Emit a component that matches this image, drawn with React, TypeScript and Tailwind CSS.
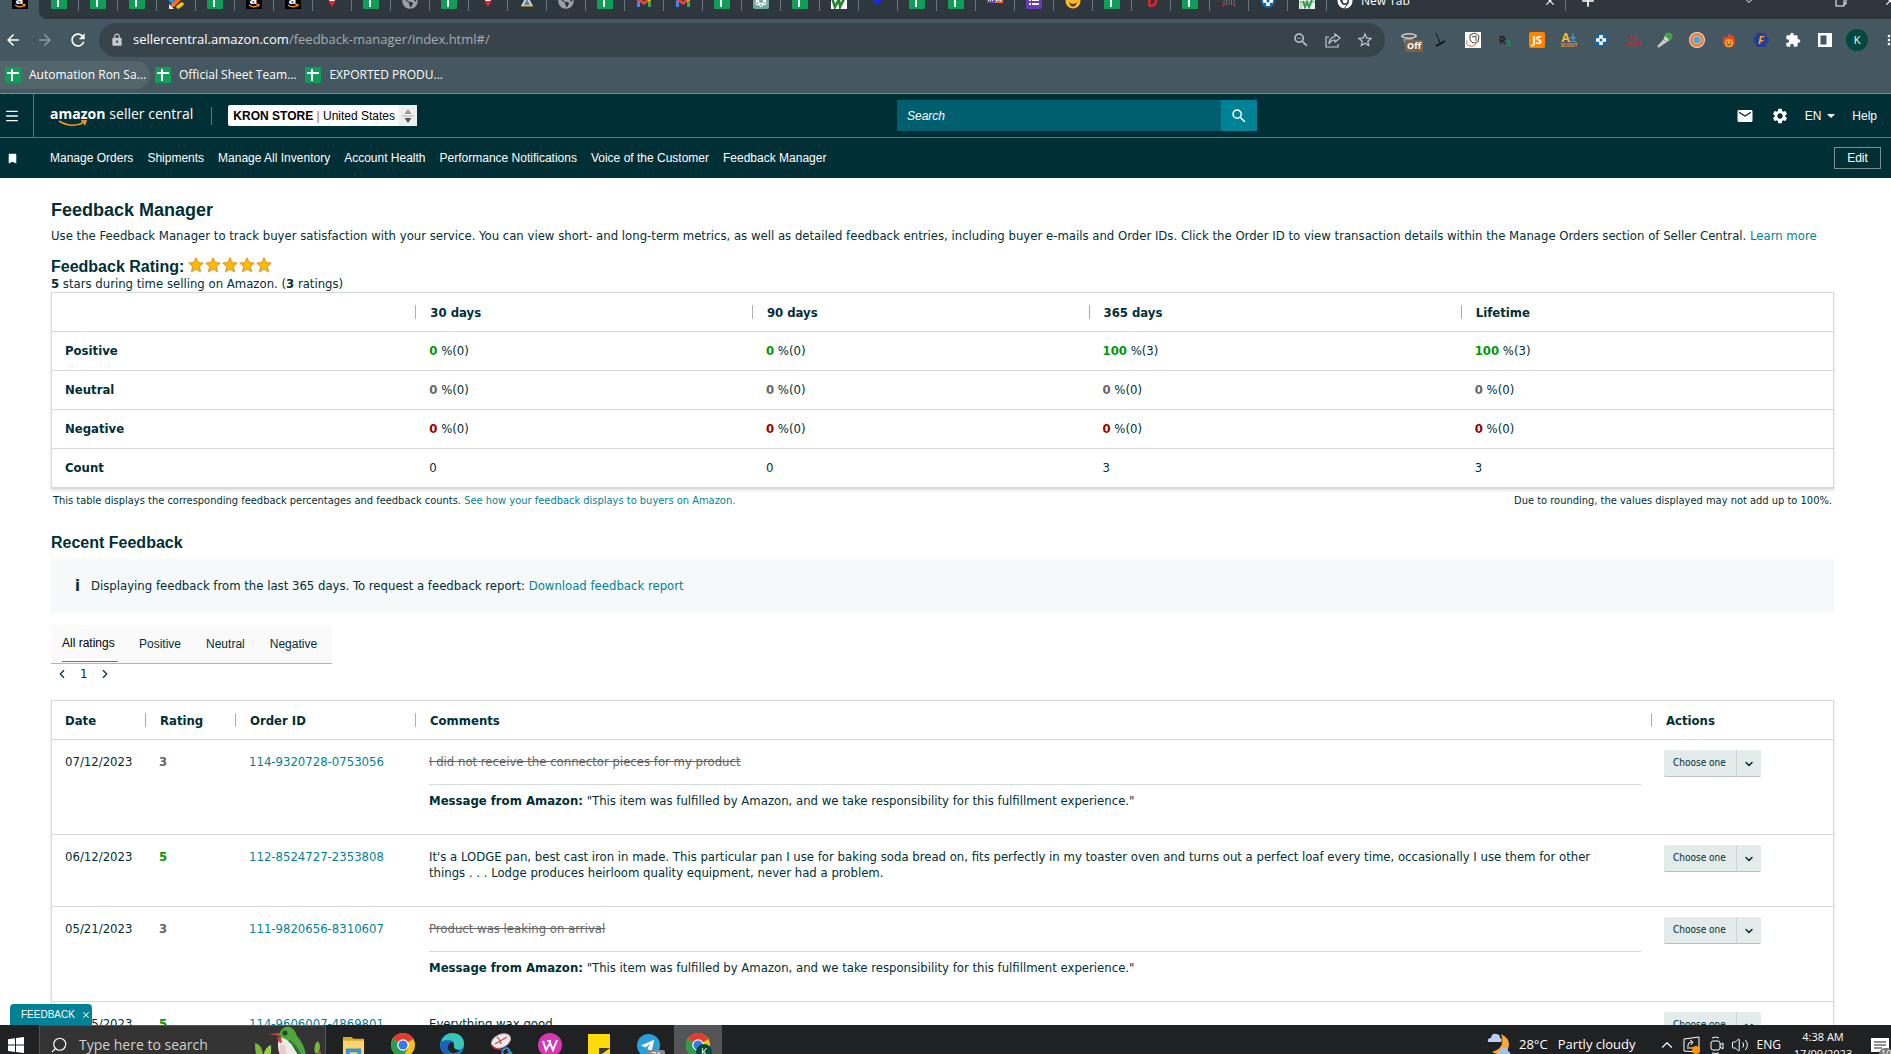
import React from 'react';
import {
  MdArrowBack, MdArrowForward, MdRefresh, MdLock, MdExtension, MdSettings, MdSearch,
  MdBookmark, MdEmail, MdMoreVert, MdZoomOut, MdStarBorder, MdAdd, MdClose,
} from 'react-icons/md';
import { FaGlobeAmericas } from 'react-icons/fa';
import { ChevronDown, ChevronLeft, ChevronRight, ChevronUp, Menu, Search, Volume2 } from 'lucide-react';

const SheetsIcon = () => (
  <svg viewBox="0 0 16 16" className="size-4 shrink-0">
    <rect width="16" height="16" rx="1" fill="#0f9d58" />
    <path d="M2 6h12M7 2v12" stroke="#fff" strokeWidth="2" />
  </svg>
);

const AmazonIcon = () => (
  <span className="relative flex size-4 shrink-0 items-center justify-center bg-black text-[13px] font-bold leading-none text-white">
    <span className="mb-1">a</span>
    <svg viewBox="0 0 16 16" className="absolute inset-0">
      <path d="M3 12q5 3.500 9.500 .3M10.500 11.300l2.500 .2-.6 2" fill="none" stroke="#f90" strokeWidth="1.300" />
    </svg>
  </span>
);

const GmailIcon = () => (
  <svg viewBox="0 0 16 16" className="size-4 shrink-0">
    <path d="M1 14V4h3v10z" fill="#4285f4" />
    <path d="M12 14V4h3v10z" fill="#34a853" />
    <path d="M1 3l7 5.500L15 3v4l-7 5-7-5z" fill="#ea4335" />
    <path d="M12 5.500L15 3v4l-3 2z" fill="#fbbc04" />
  </svg>
);

const RedPinIcon = () => (
  <svg viewBox="0 0 16 16" className="size-4 shrink-0">
    <path d="M4 5l4-3 4 3-1 4-3 5-3-5z" fill="#e8212b" />
    <path d="M5.500 7.500h5" stroke="#fff" />
  </svg>
);

const GlobeIcon = () => <FaGlobeAmericas className="size-4 shrink-0 text-[#9aa0a6]" />;

const PlusDiscIcon = () => (
  <svg viewBox="0 0 16 16" className="size-4 shrink-0">
    <circle cx="8" cy="8" r="7" fill="#17659b" />
    <path d="M6.200 3h3.600v3.200H13v3.600H9.800V13H6.200V9.800H3V6.200h3.200z" fill="#fff" />
    <circle cx="8" cy="8" r="1.500" fill="#17659b" />
  </svg>
);

const BrushIcon = () => (
  <svg viewBox="0 0 16 16" className="size-4 shrink-0">
    <path d="M2 9L9 2" stroke="#2196f3" strokeWidth="4" />
    <path d="M5 12l8-8" stroke="#ff6d1f" strokeWidth="4" strokeLinecap="round" />
    <path d="M10 14l4-3" stroke="#ffc107" strokeWidth="3.500" strokeLinecap="round" />
    <path d="M1 11v5h5z" fill="#eee" />
  </svg>
);

const MountainIcon = () => (
  <svg viewBox="0 0 16 16" className="size-4 shrink-0">
    <path d="M2 13L8 2l6 11z" fill="#cfd4d8" />
    <path d="M5 12l3-6 3 6z" fill="#607d8b" />
    <path d="M2 13h12" stroke="#e6b422" />
  </svg>
);

const GptIcon = () => (
  <svg viewBox="0 0 16 16" className="size-4 shrink-0">
    <rect width="16" height="16" rx="2" fill="#74aa9c" />
    <g fill="none" stroke="#fff">
      <ellipse cx="8" cy="8" rx="2.500" ry="5.500" />
      <ellipse cx="8" cy="8" rx="2.500" ry="5.500" transform="rotate(60 8 8)" />
      <ellipse cx="8" cy="8" rx="2.500" ry="5.500" transform="rotate(120 8 8)" />
    </g>
  </svg>
);

const LeafIcon = () => (
  <svg viewBox="0 0 16 16" className="size-4 shrink-0">
    <rect width="16" height="16" fill="#fff" />
    <path d="M1 5l3 9 4-8 1 8 5-10" fill="none" stroke="#22822b" strokeWidth="2.500" />
  </svg>
);

const BirdIcon = () => (
  <svg viewBox="0 0 16 16" className="size-4 shrink-0">
    <path d="M1 6l5 1 9-3-5 5-5 5 1-4z" fill="#1330e6" />
  </svg>
);

const StripesIcon = () => (
  <svg viewBox="0 0 16 16" className="size-4 shrink-0">
    <rect y="5" width="8" height="5" fill="#6a4bb5" />
    <rect x="8" y="5" width="8" height="5" fill="#f0702a" />
    <path d="M1 7.500h6M9 7.500h6" stroke="#fff" strokeDasharray="1 1" />
  </svg>
);

const FormsIcon = () => (
  <svg viewBox="0 0 16 16" className="size-4 shrink-0">
    <rect width="16" height="16" rx="1" fill="#673ab7" />
    <path d="M6 7h7M6 11h7" stroke="#fff" strokeWidth="2" />
    <path d="M3 7h2M3 11h2" stroke="#fff" strokeWidth="2" />
  </svg>
);

const EmojiIcon = () => (
  <svg viewBox="0 0 16 16" className="size-4 shrink-0">
    <circle cx="8" cy="8" r="7.500" fill="#fbb92c" />
    <path d="M4 9q4 4 8 0-1 4.500-4 4.500T4 9z" fill="#5b3413" />
    <path d="M4.500 6h2M9.500 6h2" stroke="#5b3413" strokeWidth="1.500" />
  </svg>
);

const RedLoopIcon = () => (
  <svg viewBox="0 0 16 16" className="size-4 shrink-0">
    <path d="M2 6q2-3 5-2l-1 9M7 4q6-1 6 4t-7 5" fill="none" stroke="#e3232c" strokeWidth="2.500" />
  </svg>
);

const GridIcon = () => (
  <svg viewBox="0 0 16 16" className="size-4 shrink-0">
    <path d="M3 3v9M5.500 3v9M8 3v9M10.500 3v9M13 3v9" stroke="#6b7075" />
    <path d="M1 13l3-2M15 13l-3-2" stroke="#b3262b" strokeWidth="2" />
  </svg>
);

const GreenBarsIcon = () => (
  <svg viewBox="0 0 16 16" className="size-4 shrink-0">
    <rect width="16" height="16" fill="#e8f1e8" />
    <path d="M2 8v8M0 9h16" stroke="#7cc08c" />
    <path d="M4 8l2 6 2-5 2 5 3-7" fill="none" stroke="#2e9b4f" strokeWidth="2" />
  </svg>
);

const ChromeIcon = ({ className }: { className: string }) => (
  <svg viewBox="0 0 24 24" className={className}>
    <circle cx="12" cy="12" r="12" fill="#fbc116" />
    <path d="M12 12L1.600 6A12 12 0 0 1 22.400 6z" fill="#e33b2e" />
    <path d="M12 12L1.600 6A12 12 0 0 0 12 24l5-9z" fill="#2c9e4b" />
    <circle cx="12" cy="12" r="5.800" fill="#fff" />
    <circle cx="12" cy="12" r="4.600" fill="#3b78e7" />
  </svg>
);

const tabIcons = [
  SheetsIcon, SheetsIcon, SheetsIcon, BrushIcon, SheetsIcon, AmazonIcon, AmazonIcon, RedPinIcon,
  SheetsIcon, GlobeIcon, SheetsIcon, RedPinIcon, MountainIcon, GlobeIcon, SheetsIcon, GmailIcon,
  GmailIcon, SheetsIcon, GptIcon, SheetsIcon, LeafIcon, BirdIcon, SheetsIcon, SheetsIcon,
  StripesIcon, FormsIcon, EmojiIcon, SheetsIcon, RedLoopIcon, SheetsIcon, GridIcon, PlusDiscIcon,
  GreenBarsIcon,
];

const bookmarks = ['Automation Ron Sa...', 'Official Sheet Team...', 'EXPORTED PRODU...'];

const navLinks = [
  'Manage Orders', 'Shipments', 'Manage All Inventory', 'Account Health',
  'Performance Notifications', 'Voice of the Customer', 'Feedback Manager',
];

const periods = ['30 days', '90 days', '365 days', 'Lifetime'];

const ratingRows = [
  { label: 'Positive', color: 'text-[#009900]', values: [[0, 0], [0, 0], [100, 3], [100, 3]] },
  { label: 'Neutral', color: 'text-[#666666]', values: [[0, 0], [0, 0], [0, 0], [0, 0]] },
  { label: 'Negative', color: 'text-[#990000]', values: [[0, 0], [0, 0], [0, 0], [0, 0]] },
];

const amazonMessage = '"This item was fulfilled by Amazon, and we take responsibility for this fulfillment experience."';

const feedback = [
  { date: '07/12/2023', rating: 3, order: '114-9320728-0753056', comment: 'I did not receive the connector pieces for my product', struck: true },
  {
    date: '06/12/2023', rating: 5, order: '112-8524727-2353808', struck: false,
    comment: "It's a LODGE pan, best cast iron in made. This particular pan I use for baking soda bread on, fits perfectly in my toaster oven and turns out a perfect loaf every time, occasionally I use them for other things . . . Lodge produces heirloom quality equipment, never had a problem.",
  },
  { date: '05/21/2023', rating: 3, order: '111-9820656-8310607', comment: 'Product was leaking on arrival', struck: true },
  { date: '05/15/2023', rating: 5, order: '114-9606007-4869801', comment: 'Everything wax good', struck: false },
];

const TabStrip = () => (
  <div className="flex h-[19px] items-end overflow-hidden bg-[#2d373d]">
    <div className="flex h-9 w-full shrink-0 items-center bg-[#455760]">
      <div className="flex h-9 w-[39px] shrink-0 items-center justify-center">
        <AmazonIcon />
      </div>
      <div className="flex h-9 min-w-0 flex-1 items-center rounded-bl-lg bg-[#2d373d]">
        {tabIcons.map((Icon, i) => (
          <div key={i} className="flex h-9 w-[39px] shrink-0 items-center justify-center">
            <Icon />
            <span className="-mr-3 ml-[11px] h-5 w-px bg-[#69757c]" />
          </div>
        ))}
        <div className="flex h-9 w-[240px] shrink-0 items-center gap-2 pl-[11px] text-xs text-white">
          <svg viewBox="0 0 16 16" className="size-4">
            <circle cx="8" cy="8" r="7.500" fill="#fff" />
            <circle cx="8" cy="8" r="3.200" fill="none" stroke="#2d373d" strokeWidth="1.500" />
            <path d="M8 4.500h7M5 10L2 5M11 10l-4 6" stroke="#2d373d" />
          </svg>
          <span>New Tab</span>
          <button aria-label="Close tab" className="ml-auto"><MdClose className="size-3.5" /></button>
          <span className="h-5 w-px bg-[#69757c]" />
        </div>
        <button aria-label="New tab" className="ml-3 text-white"><MdAdd className="size-5" /></button>
        <div className="ml-auto flex items-center text-white">
          <ChevronDown className="size-3" />
          <svg viewBox="0 0 12 12" className="ml-20 size-3" fill="none" stroke="currentColor">
            <rect x="1" y="3" width="8" height="8" />
            <path d="M3 3V1h8v8H9" />
          </svg>
          <MdClose className="-mr-1.5 ml-9 size-3.5" />
        </div>
      </div>
    </div>
  </div>
);

const Extensions = () => (
  <div className="flex items-center gap-4">
    <span className="relative size-4">
      <svg viewBox="0 0 16 16" className="size-4">
        <ellipse cx="8" cy="4" rx="8" ry="3" fill="#c9ccce" />
        <ellipse cx="8" cy="4" rx="6" ry="1.500" fill="#555" />
        <path d="M2 7h10v6H4z" fill="#8b8f92" />
      </svg>
      <span className="absolute left-1 top-2 rounded-xs bg-[#806242] px-0.5 text-[9px] font-bold leading-3 text-white">Off</span>
    </span>
    <svg viewBox="0 0 16 16" className="size-4">
      <path d="M3 1l5 12" stroke="#111" />
      <path d="M3 14l9-5" stroke="#111" strokeWidth="1.800" />
    </svg>
    <svg viewBox="0 0 16 16" className="size-4">
      <rect width="16" height="16" fill="#fff" />
      <path d="M5 3l5-2 4 3-1 6-5 1-3-3z" fill="none" stroke="#444" />
      <path d="M7 5l4-1v5" fill="none" stroke="#444" />
      <path d="M2 8q-2 5 3 6t7-4" fill="none" stroke="#e7a57a" strokeWidth="1.500" />
    </svg>
    <span className="flex size-4 items-center justify-center text-[11px] font-bold text-[#222]">R<span className="mt-1 text-[#168a44]">s</span></span>
    <span className="flex size-4 items-center justify-center rounded-xs bg-[#ff8400] text-[11px] font-bold text-white">JS</span>
    <span className="flex size-4 flex-col items-center justify-center text-[#fdb92e]">
      <span className="text-[12px] font-bold leading-[11px]">A<span className="text-[#24a8e0]">±</span></span>
      <span className="text-[5px] font-bold leading-[5px] text-[#f39a1e]">SCOUT</span>
    </span>
    <PlusDiscIcon />
    <span className="flex size-4 flex-col items-center justify-center font-['Liberation_Serif',serif] text-[7px] font-bold leading-[6px] text-[#dd1c24]"><span>IP</span><span>Alert</span></span>
    <svg viewBox="0 0 16 16" className="size-4">
      <path d="M1 15l8-9 2 2z" stroke="#c8c8c8" strokeWidth="2" />
      <circle cx="11.500" cy="4.500" r="4" fill="#49a044" />
      <path d="M8 4l4 4-2 1-3-3z" fill="#ddd" />
    </svg>
    <svg viewBox="0 0 16 16" className="size-4">
      <circle cx="8" cy="8" r="8" fill="#f4dccb" />
      <circle cx="8" cy="8" r="5.500" fill="none" stroke="#ee7f3b" strokeWidth="3" />
      <circle cx="8" cy="8" r="3.500" fill="#4aa6dc" />
    </svg>
    <svg viewBox="0 0 16 16" className="size-4">
      <path d="M8 0q1 3 3 4l1-1q2 3 2 6.500A6 6 0 0 1 2 10q0-4 2-6l1 2q3-2 3-6z" fill="#e4472b" />
      <circle cx="8" cy="11" r="4" fill="#f7a823" />
      <path d="M6 10h1M9 10h1M6 12q2 2 4 0" stroke="#4d2208" fill="none" />
    </svg>
    <span className="relative flex size-4 items-center justify-center text-[11px] font-bold italic text-[#f7a823]">
      <svg viewBox="0 0 16 16" className="absolute inset-0"><path d="M4 1h8l4 7-4 7H4L0 8z" fill="#243b98" /></svg>
      <span className="relative">F</span>
    </span>
    <MdExtension className="size-4 text-white" />
    <svg viewBox="0 0 16 16" className="size-4">
      <path d="M1 1h14v14H1z" fill="#fff" />
      <path d="M3.500 3.500h6v9h-6z" fill="#455760" />
    </svg>
    <span className="-mx-[3px] flex size-[22px] items-center justify-center rounded-full bg-[#00493c] text-[11px] text-white">K</span>
    <MdMoreVert className="-mr-1.5 size-4 text-white" />
  </div>
);

const Toolbar = () => (
  <div className="border-b border-[#7b8b91] bg-[#455760]">
    <div className="flex items-center pt-1">
      <div className="flex w-[99px] shrink-0 items-center gap-3.5 pl-1 text-white">
        <button aria-label="Back"><MdArrowBack className="size-[18px]" /></button>
        <button aria-label="Forward" className="text-[#8d989e]"><MdArrowForward className="size-[18px]" /></button>
        <button aria-label="Reload"><MdRefresh className="size-5" /></button>
      </div>
      <div className="flex h-[34px] flex-1 items-center gap-[9px] rounded-full bg-[#38444b] px-[11px] text-[#c3c8cb]">
        <MdLock className="size-3.5" />
        <div className="flex-1 text-[13px] text-[#a5adb1]">
          <span className="text-white">sellercentral.amazon.com</span>/feedback-manager/index.html#/
        </div>
        <MdZoomOut className="size-[18px]" />
        <svg viewBox="0 0 16 16" className="mx-1.5 size-4" fill="none" stroke="currentColor" strokeWidth="1.200">
          <path d="M4 5H1v10h12v-3" />
          <path d="M10 2l5 4-5 4V8Q6 8 4 12q0-6 6-7.500z" />
        </svg>
        <MdStarBorder className="size-[18px]" />
      </div>
      <div className="pl-4"><Extensions /></div>
    </div>
    <div className="flex h-9 items-center text-xs text-white">
      {bookmarks.map((name, i) => (
        <a key={name} href="#" className={`flex h-7 items-center gap-2 rounded-r-full pl-[5px] pr-1 ${i === 0 ? 'bg-[#52656b]' : ''}`}>
          <SheetsIcon />
          {name}
        </a>
      ))}
    </div>
  </div>
);

const SellerHeader = () => (
  <header className="bg-[#002f36] font-['Liberation_Sans',Arial,sans-serif] text-xs text-white">
    <div className="flex h-11 items-center border-b border-[#5b777c]">
      <button aria-label="Menu" className="flex h-full w-[34px] items-center border-r border-[#5b777c] pl-1">
        <Menu className="size-4" />
      </button>
      <a href="#" aria-label="amazon seller central" className="relative mb-1 ml-4 flex gap-1 font-['Open_Sans',sans-serif] text-sm leading-5">
        <span className="font-bold">amazon</span>
        <span>seller central</span>
        <svg viewBox="0 0 30 8" className="absolute left-2 top-4 h-2 w-[30px]" fill="none" stroke="#f7981d" strokeWidth="1.500">
          <path d="M1 1q13 8 26 1M23 1l5-.2-1.500 4.500" />
        </svg>
      </a>
      <span className="ml-[18px] h-[18px] w-px bg-[#5b777c]" />
      <div className="relative ml-4 flex h-[21px] items-center rounded-xs bg-white pl-[5px] text-black">
        <span><b>KRON STORE</b> <span className="text-[#a06a1c]">|</span> United States</span>
        <span className="ml-1 flex h-full w-[18px] items-center justify-center bg-[#efefef]">
          <svg viewBox="0 0 12 14" className="h-3.5 w-3">
            <path d="M6 0l3.500 5h-7z" fill="#999" />
            <path d="M0 7h12" stroke="#aaa" />
            <path d="M6 14L2.500 9h7z" fill="#555" />
          </svg>
        </span>
        <select aria-label="Store and marketplace" className="absolute inset-0 opacity-0">
          <option>KRON STORE | United States</option>
        </select>
      </div>
      <form className="ml-[480px] flex h-[31px] min-w-0 shrink">
        <input aria-label="Search" placeholder="Search" className="w-[324px] min-w-0 bg-[#005f6f] px-2.5 italic placeholder:text-white" />
        <button type="button" aria-label="Submit search" className="flex w-9 items-center justify-center bg-[#008296]">
          <MdSearch className="size-[18px]" />
        </button>
      </form>
      <div className="ml-auto flex items-center pr-3.5">
        <button aria-label="Messages"><MdEmail className="size-[18px]" /></button>
        <button aria-label="Settings" className="ml-[17px]"><MdSettings className="size-[18px]" /></button>
        <button className="ml-4 flex items-center gap-1.5">
          EN
          <svg viewBox="0 0 8 4" className="h-1 w-2"><path d="M0 0h8L4 4z" fill="#fff" /></svg>
        </button>
        <a href="#" className="ml-[17px]">Help</a>
      </div>
    </div>
    <nav className="flex h-10 items-center">
      <MdBookmark className="ml-[6px] mr-[31px] size-[13px]" />
      <div className="flex gap-3.5">
        {navLinks.map((link) => <a key={link} href="#">{link}</a>)}
      </div>
      <button className="ml-auto mr-2.5 h-[22px] w-[47px] border border-[#7b8f93]">Edit</button>
    </nav>
  </header>
);

const Star = () => (
  <svg viewBox="0 0 16 16" className="size-4">
    <path d="M8 .8l2.100 4.800 5.100.5-3.800 3.500 1.100 5.200L8 12.100l-4.500 2.700 1.100-5.200L.8 6.100l5.100-.5z" fill="#ffba00" stroke="#d9922b" />
  </svg>
);

const RatingTable = () => (
  <table className="w-full table-fixed border-separate border-spacing-0 border border-b-2 border-[#d5dbdb] text-left shadow-[0_1px_3px_rgba(0,0,0,0.15)]">
    <thead>
      <tr className="h-[38px]">
        <td className="w-[20.4%]" />
        {periods.map((p, i) => (
          <th key={p} className={i < 2 ? 'w-[18.9%] p-0' : 'w-[20.9%] p-0'}>
            <div className="h-3.5 border-l border-[#a6b1b3] pl-3.5 leading-4">{p}</div>
          </th>
        ))}
      </tr>
    </thead>
    <tbody>
      {ratingRows.map((row) => (
        <tr key={row.label} className="h-[39px]">
          <th className="border-t border-[#d5dbdb] pl-[13px]">{row.label}</th>
          {row.values.map(([pct, count], i) => (
            <td key={i} className="border-t border-[#d5dbdb] pl-3.5">
              <b className={row.color}>{pct}</b> %({count})
            </td>
          ))}
        </tr>
      ))}
      <tr className="h-[39px]">
        <th className="border-t border-[#d5dbdb] pl-[13px]">Count</th>
        {[0, 0, 3, 3].map((n, i) => <td key={i} className="border-t border-[#d5dbdb] pl-3.5">{n}</td>)}
      </tr>
    </tbody>
  </table>
);

const FeedbackTable = () => (
  <table className="w-full table-fixed border-separate border-spacing-0 border border-[#d5dbdb] text-left shadow-[0_1px_3px_rgba(0,0,0,0.15)]">
    <thead>
      <tr className="h-[38px]">
        <th className="w-[93px] p-0"><div className="h-3.5 pl-[13px] leading-4">Date</div></th>
        <th className="w-[90px] p-0"><div className="h-3.5 border-l border-[#a6b1b3] pl-3.5 leading-4">Rating</div></th>
        <th className="w-[180px] p-0"><div className="h-3.5 border-l border-[#a6b1b3] pl-3.5 leading-4">Order ID</div></th>
        <th className="p-0"><div className="h-3.5 border-l border-[#a6b1b3] pl-3.5 leading-4">Comments</div></th>
        <th className="w-[182px] p-0"><div className="h-3.5 border-l border-[#a6b1b3] pl-3.5 leading-4">Actions</div></th>
      </tr>
    </thead>
    <tbody>
      {feedback.map((f) => (
        <tr key={f.order} className="align-top">
          <td className="border-t border-[#d5dbdb] pl-[13px] pt-3.5">{f.date}</td>
          <td className={`border-t border-[#d5dbdb] pl-3.5 pt-3.5 font-bold ${f.rating === 5 ? 'text-[#009900]' : 'text-[#666666]'}`}>{f.rating}</td>
          <td className="border-t border-[#d5dbdb] pl-3.5 pt-3.5"><a href="#" className="text-[#008296]">{f.order}</a></td>
          <td className="border-t border-[#d5dbdb] pb-[25px] pl-3.5 pr-[10px] pt-3.5">
            <p className={f.struck ? 'text-[#666666] line-through' : 'pr-4'}>{f.comment}</p>
            {f.struck && (
              <p className="mt-3.5 border-t border-[#d5dbdb] pt-2">
                <b>Message from Amazon:</b> {amazonMessage}
              </p>
            )}
          </td>
          <td className="border-t border-[#d5dbdb] pl-[13px] pt-2.5">
            <div className="relative w-[97px]">
              <select aria-label={`Action for order ${f.order}`} className="block h-[27px] w-full appearance-none rounded-xs border-b border-[#b9c1c1] bg-[#e3ebeb] pl-[9px] text-[10px]">
                <option>Choose one</option>
              </select>
              <span className="pointer-events-none absolute inset-y-0 right-0 flex w-[25px] items-center justify-center border-l border-[#cdd6d6]">
                <ChevronDown className="size-3" strokeWidth={3} />
              </span>
            </div>
          </td>
        </tr>
      ))}
    </tbody>
  </table>
);

const FeedbackManager = () => (
  <main className="relative min-h-0 flex-1 overflow-hidden bg-white pl-[51px] pr-[57px] font-['DejaVu_Sans_Condensed','DejaVu_Sans',Verdana,sans-serif] text-[13px] leading-4 text-[#002f36]">
    <h1 className="mt-5 font-['Liberation_Sans',Arial,sans-serif] text-lg font-bold leading-6">Feedback Manager</h1>
    <p className="mt-1.5">
      Use the Feedback Manager to track buyer satisfaction with your service. You can view short- and long-term metrics, as well as detailed feedback entries, including buyer e-mails and Order IDs. Click the Order ID to view transaction details within the Manage Orders section of Seller Central. <a href="#" className="text-[#008296]">Learn more</a>
    </p>
    <div className="mt-3.5 flex h-[18px] items-center gap-1">
      <h2 className="font-['Liberation_Sans',Arial,sans-serif] text-base font-bold leading-5">Feedback Rating:</h2>
      <div className="mb-1 flex gap-px">
        {[1, 2, 3, 4, 5].map((n) => <Star key={n} />)}
      </div>
    </div>
    <p><b>5</b> stars during time selling on Amazon. (<b>3</b> ratings)</p>
    <RatingTable />
    <div className="mt-1 flex justify-between px-0.5 text-[11px]">
      <p>This table displays the corresponding feedback percentages and feedback counts. <a href="#" className="text-[#008296]">See how your feedback displays to buyers on Amazon.</a></p>
      <p>Due to rounding, the values displayed may not add up to 100%.</p>
    </div>
    <h2 className="mt-6 font-['Liberation_Sans',Arial,sans-serif] text-base font-bold leading-5">Recent Feedback</h2>
    <div className="mt-1.5 flex h-[54px] items-center bg-[#f5f9fa] pl-6">
      <b className="w-4 text-base">i</b>
      <p>Displaying feedback from the last 365 days. To request a feedback report: <a href="#" className="text-[#008296]">Download feedback report</a></p>
    </div>
    <div className="mt-3 flex h-[39px] w-[281px] border-b border-[#b5b5b5] bg-[#fafafa] pl-[11px] font-['Liberation_Sans',Arial,sans-serif] text-xs">
      <button className="mb-px mr-[21px] w-14 border-b border-[#00a4b4] text-left text-black">All ratings</button>
      <button className="mr-[25px]">Positive</button>
      <button className="mr-[25px]">Neutral</button>
      <button>Negative</button>
    </div>
    <div className="flex h-5 items-center gap-[11px] pl-1">
      <button aria-label="Previous page"><ChevronLeft className="size-3.5" strokeWidth={2} /></button>
      <span>1</span>
      <button aria-label="Next page"><ChevronRight className="size-3.5" strokeWidth={2} /></button>
    </div>
    <div className="mt-4"><FeedbackTable /></div>
    <button className="absolute bottom-0 left-[10px] flex h-[21px] w-[82px] items-center gap-1.5 rounded-t bg-[#008296] pl-[11px] font-['Liberation_Sans',Arial,sans-serif] text-[10px] text-white">
      FEEDBACK <MdClose className="size-2.5" />
    </button>
  </main>
);

const Bird = () => (
  <svg viewBox="0 0 66 40" className="ml-auto mr-1 h-10 w-[66px]">
    <path d="M0 18q8 2 8 14l-1 8H4Q0 30 0 18z" fill="#7cb63a" />
    <path d="M8 36q0-13 8-16 1 12-5 20H8z" fill="#9acb4b" />
    <path d="M24 13q5-3 10 2l8 13 6 12H32q-12-12-8-27z" fill="#e9efe6" />
    <path d="M25 20q-2 10 6 18l8 2q-8-8-9-20z" fill="#f0c9cf" />
    <path d="M25 7q3-6 10-5 5 2 7 9 8 8 10 25-8-4-12-14l-8-7-8-4z" fill="#4ea63c" />
    <path d="M34 16q8 4 14 20" stroke="#2c7a35" strokeWidth="2" fill="none" />
    <path d="M25 11L13 9l12-1z" fill="#c9473d" />
    <path d="M22 12q1 6 5 6l-1-6z" fill="#e0352e" />
    <circle cx="30" cy="8" r="2.500" fill="#1d4d2a" />
    <path d="M46 33q10 1 20-6" stroke="#8a6546" strokeWidth="2.500" fill="none" />
    <path d="M60 28q-2-8 3-12 4 6 0 12z" fill="#7cb63a" />
  </svg>
);

const Taskbar = () => (
  <footer className="h-[29px] shrink-0 overflow-hidden bg-[#202122] font-['Open_Sans',sans-serif] text-[13px] text-white">
    <div className="flex h-10 items-center">
      <button aria-label="Start" className="flex w-[39px] shrink-0 justify-center pr-2">
        <svg viewBox="0 0 16 16" className="size-4" fill="#fff">
          <path d="M0 2.200l7-1v6.400H0zM8 1l8-1v7.600H8zM0 8.600h7V15l-7-1zM8 8.600h8V16l-8-1z" />
        </svg>
      </button>
      <label className="flex h-full w-[287px] shrink-0 items-center border border-[#555] bg-[#333]">
        <Search className="ml-2.5 size-[18px] shrink-0 -scale-x-100" strokeWidth={1.5} />
        <input aria-label="Type here to search" placeholder="Type here to search" className="ml-[11px] w-[150px] min-w-0 text-sm placeholder:text-[#d0d0d0]" />
        <Bird />
      </label>
      <div className="flex h-full items-center pl-0.5">
        <div className="flex w-[50px] justify-center">
          <svg viewBox="0 0 24 24" className="size-[23px]">
            <path d="M1 3h9l2 2h11v16H1z" fill="#dfa22f" />
            <path d="M1 7h22v14H1z" fill="#fcd46c" />
            <path d="M4 24v-9h16v9h-4v-5H8v5z" fill="#3a92d6" />
          </svg>
        </div>
        <div className="flex w-[49px] justify-center"><ChromeIcon className="size-6" /></div>
        <div className="flex w-[49px] justify-center">
          <svg viewBox="0 0 24 24" className="size-6">
            <circle cx="12" cy="12" r="12" fill="#1479c9" />
            <path d="M1 9Q4 0 13 0q11 1 11 11 0 6-8 6-4-1-2-4 1-6-5-6-5 0-8 2z" fill="#39c4b8" />
            <path d="M14 12q-1 5 6 5-6 6-11 1-4-6 2-9 3 0 3 3z" fill="#202122" />
            <path d="M1 9q6-3 10 0-5 4-2 10 3 5 9 3-8 5-14-1Q0 16 1 9z" fill="#1b62b5" />
          </svg>
        </div>
        <div className="flex w-[49px] justify-center">
          <svg viewBox="0 0 24 24" className="size-6">
            <ellipse cx="12" cy="8" rx="10" ry="6.500" transform="rotate(-25 12 8)" fill="#ececec" stroke="#b9a9a9" />
            <path d="M8 4q3 2 4 7M18 4L6 11" fill="none" stroke="#c44" strokeWidth="1.200" />
            <path d="M3 12q2 5 10 4" fill="none" stroke="#c33" strokeWidth="1.500" />
            <path d="M14 17q4-4 6 0t-4 5q-4-1-2-5zM19 17l4 4" fill="none" stroke="#3791d4" strokeWidth="2" />
          </svg>
        </div>
        <div className="flex w-[49px] justify-center">
          <svg viewBox="0 0 24 24" className="size-6">
            <circle cx="12" cy="12" r="12" fill="#d837b4" />
            <path d="M5 8l3 9 4-7 3 7 4-10M9 8h4" fill="none" stroke="#fff" strokeWidth="2" />
          </svg>
        </div>
        <div className="flex w-[49px] justify-center">
          <svg viewBox="0 0 22 22" className="size-[22px]">
            <path d="M0 0h22v22H0z" fill="#fdda0c" />
            <path d="M11 22v-8h11z" fill="#3b3b3b" />
          </svg>
        </div>
        <div className="relative flex w-[51px] justify-center">
          <svg viewBox="0 0 24 24" className="size-[23px]">
            <circle cx="12" cy="12" r="12" fill="#2a9fda" />
            <path d="M4 12l14-6-3 13-4-4 3-5-5 4z" fill="#fff" />
          </svg>
          <span className="absolute left-6 top-4 rounded-xs bg-[#888] px-1 text-[9px] leading-3">71</span>
        </div>
        <div className="relative flex h-full w-12 items-center justify-center bg-[#545556]">
          <ChromeIcon className="size-6" />
          <span className="absolute left-[22px] top-[19px] flex size-4 items-center justify-center rounded-full bg-[#00493c] text-[10px]">K</span>
        </div>
      </div>
      <div className="ml-auto flex shrink-0 items-center pr-0.5">
        <svg viewBox="0 0 24 24" className="mr-2 size-6">
          <path d="M14 1q12 6 6 17-6 6-15 1 14-4 9-18z" fill="#f6a83b" />
          <path d="M1 9q-1-4 3-4 1-5 5-4 4 0 4 4 3 1 1 4z" fill="#bcd0f7" />
          <path d="M10 22q-1-4 3-4 1-4 5-3 3 0 3 3 3 1 2 4z" fill="#a7c0f2" />
        </svg>
        <span className="mr-2.5">28°C</span>
        <span className="mr-[22px]">Partly cloudy</span>
        <ChevronUp className="size-[18px]" strokeWidth={1.5} />
        <svg viewBox="0 0 18 18" className="ml-[7px] size-[18px]" fill="none" stroke="#fff">
          <path d="M1 3l15-2v15L1 15z" />
          <path d="M5 13V9q0-3 4-3M7 4l3 2-2 3M6 12h4" />
          <circle cx="13" cy="14" r="4" fill="#ff9500" stroke="none" />
        </svg>
        <svg viewBox="0 0 16 18" className="ml-2 h-[18px] w-4" fill="none" stroke="#fff">
          <rect x="2" y="5" width="9" height="9" rx="2" />
          <path d="M11 9l3-2v6l-3-2M3 2q4-2 7 0M3 17q4 1 7 0" />
        </svg>
        <Volume2 className="ml-1.5 size-[18px]" strokeWidth={1.3} />
        <span className="ml-2 text-xs">ENG</span>
        <div className="ml-2.5 w-16 text-center text-[11px] leading-[17px]">
          <div>4:38 AM</div>
          <div>17/09/2023</div>
        </div>
        <span className="relative ml-4 mt-1">
          <svg viewBox="0 0 18 18" className="size-[18px]">
            <path d="M0 0h18v14h-6l-3 4v-4H0z" fill="#fff" />
            <path d="M3 4h12M3 7h12M3 10h8" stroke="#222" />
          </svg>
          <span className="absolute left-2 top-2.5 rounded-full bg-[#777] px-0.5 text-[9px] leading-3">10</span>
        </span>
      </div>
    </div>
  </footer>
);

const App: React.FC = () => {
  return (
    <div className="flex h-screen flex-col overflow-hidden font-['Open_Sans',sans-serif]">
      <TabStrip />
      <Toolbar />
      <SellerHeader />
      <FeedbackManager />
      <Taskbar />
    </div>
  );
};

export default App;
